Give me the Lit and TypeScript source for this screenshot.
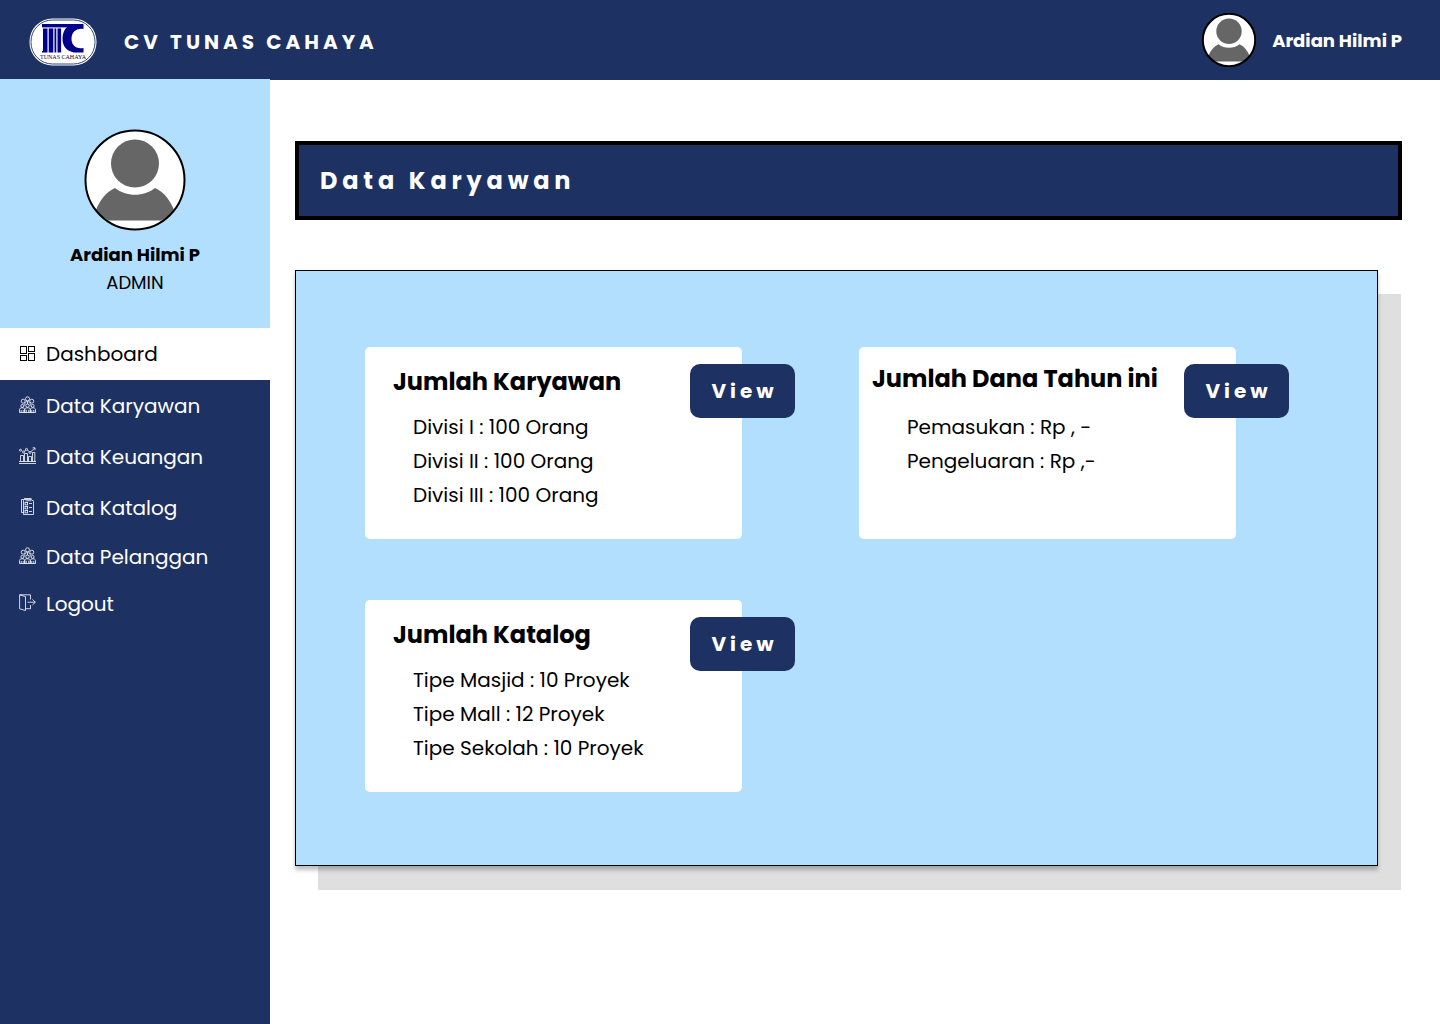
import { LitElement, html, css, svg, nothing, type TemplateResult } from "lit";
import { customElement, property } from "lit/decorators.js";

type IconName = "grid" | "people" | "chart" | "catalog" | "logout";

interface NavItem {
  label: string;
  icon: IconName;
  active?: boolean;
  compact?: boolean;
}

interface SummaryCard {
  title: string;
  wide?: boolean;
  lines: string[];
}

const NAV_ITEMS: NavItem[] = [
  { label: "Dashboard", icon: "grid", active: true },
  { label: "Data Karyawan", icon: "people" },
  { label: "Data Keuangan", icon: "chart" },
  { label: "Data Katalog", icon: "catalog" },
  { label: "Data Pelanggan", icon: "people", compact: true },
  { label: "Logout", icon: "logout", compact: true },
];

const CARDS: SummaryCard[] = [
  {
    title: "Jumlah Karyawan",
    lines: ["Divisi I : 100 Orang", "Divisi II : 100 Orang", "Divisi III : 100 Orang"],
  },
  {
    title: "Jumlah Dana Tahun ini",
    wide: true,
    lines: ["Pemasukan : Rp , -", "Pengeluaran : Rp ,-"],
  },
  {
    title: "Jumlah Katalog",
    lines: ["Tipe Masjid : 10 Proyek", "Tipe Mall : 12 Proyek", "Tipe Sekolah : 10 Proyek"],
  },
];

const ICONS: Record<IconName, TemplateResult> = {
  grid: svg`
    <rect x="1.5" y="1.5" width="6" height="7"/>
    <rect x="9.5" y="1.5" width="6" height="5"/>
    <rect x="1.5" y="10.5" width="6" height="5"/>
    <rect x="9.5" y="8.5" width="6" height="7"/>`,
  people: svg`
    <circle cx="8.5" cy="2.8" r="2"/>
    <circle cx="4.2" cy="5.2" r="2"/>
    <circle cx="12.8" cy="5.2" r="2"/>
    <path d="M5.8 9.5V7.6C5.8 6.2 7 5.6 8.5 5.6S11.2 6.2 11.2 7.6V9.5M8.5 5.6V8"/>
    <circle cx="3.4" cy="9.9" r="1.5"/>
    <circle cx="8.5" cy="9.7" r="1.7"/>
    <circle cx="13.6" cy="9.9" r="1.5"/>
    <path d="M.5 16.5V13.6C.5 12.4 1.6 11.8 3.2 11.8S5.7 12.4 5.7 13.6V16.5M5.7 16.5V13.6C5.7 12.4 7 11.8 8.5 11.8S11.3 12.4 11.3 13.6V16.5M11.3 16.5V13.6C11.3 12.4 12.4 11.8 13.8 11.8S16.5 12.4 16.5 13.6V16.5M.5 16.5H16.5M2.2 14V16.5M4.2 14V16.5M7.3 13.8V16.5M9.7 13.8V16.5M12.8 14V16.5M14.8 14V16.5"/>`,
  chart: svg`
    <path d="M0 14.5H17M0 16.5H17"/>
    <path d="M1.5 14.5V8.5H4.5V14.5M5.5 14.5V6.5H8.5V14.5M9.5 14.5V9.5H12.5V14.5M13.5 14.5V5.5H15.8V14.5"/>
    <circle cx="1.5" cy="3.2" r="1"/>
    <circle cx="4.5" cy="5" r="1"/>
    <circle cx="7.5" cy="2.4" r="1"/>
    <circle cx="11" cy="5.4" r="1"/>
    <path d="M5.2 4.4L6.9 3M8.4 3L10.2 4.8M11.8 4.8L15.8 1M13.6 .8H16V3.2"/>`,
  catalog: svg`
    <path d="M4.500 1.500H2.500V14.500H4.500M4.500 2.500V16.500H14.500V3.500L12.500 1.500H4.500ZM5 .500H12.500M12.500 2.500H14.500"/>
    <rect x="6" y="4.5" width="2.6" height="2.4"/>
    <rect x="6" y="8.5" width="2.6" height="2.4"/>
    <rect x="6" y="12.5" width="2.6" height="2.4"/>
    <path d="M10 5.5H13M10 9.5H13M10 13.5H13M6.5 2.8H12"/>`,
  logout: svg`
    <path d="M.6 .8L6.5 2.6V16.5L.6 14.8ZM.6 .8H11.5V5.5M11.5 11V14.7H6.5M8.5 8.2H16.3M13.4 5.4L16.3 8.2L13.4 11"/>`,
};

/** Thin-line icon used by the sidebar links. */
@customElement("nav-icon")
export class NavIcon extends LitElement {
  @property() name: IconName = "grid";

  static styles = css`
    :host {
      display: block;
      flex: none;
      width: 17px;
      height: 17px;
    }
    .icon {
      display: block;
      width: 100%;
      height: 100%;
      fill: none;
      stroke: currentColor;
      stroke-width: 0.8;
    }
    .strong {
      stroke-width: 1;
    }
  `;

  render() {
    return html`<svg class="icon ${this.name === "grid" ? "strong" : ""}" viewBox="0 0 17 17" aria-hidden="true">
      ${ICONS[this.name]}
    </svg>`;
  }
}

/** Round placeholder portrait; its size comes from the host. */
@customElement("user-avatar")
export class UserAvatar extends LitElement {
  static styles = css`
    :host {
      display: block;
      flex: none;
    }
    .portrait {
      display: block;
      width: 100%;
      height: 100%;
    }
    .disc {
      fill: #fff;
    }
    .ring {
      fill: none;
      stroke: #000;
      stroke-width: 2;
      vector-effect: non-scaling-stroke;
    }
    .figure {
      fill: #666;
    }
  `;

  render() {
    return html`<svg class="portrait" viewBox="0 0 102 102" aria-hidden="true">
      <circle class="disc" cx="51" cy="51" r="49.5" />
      <circle class="figure" cx="51" cy="34.5" r="24" />
      <path class="figure" d="M12 81C16 71 22 63 31 59C42 68 60 68 71 59C80 63 86 71 90 81C87 86 82 89 77 91.5H25C20 89 15 86 12 81Z" />
      <circle class="ring" cx="51" cy="51" r="49.5" />
    </svg>`;
  }
}

/** Company badge: pill with a column mark and the company name. */
@customElement("brand-logo")
export class BrandLogo extends LitElement {
  static styles = css`
    :host {
      display: block;
      flex: none;
      width: 68px;
      height: 48px;
    }
    .badge {
      display: block;
      width: 100%;
      height: 100%;
    }
    .plate {
      fill: #fff;
    }
    .line {
      fill: none;
      stroke: #1e3163;
      stroke-width: 0.9;
    }
    .mark {
      fill: #00008b;
    }
    .name {
      fill: #00003c;
      font: 6px "Liberation Serif", "Times New Roman", serif;
    }
  `;

  render() {
    return html`<svg class="badge" viewBox="0 0 68 48" role="img" aria-label="Tunas Cahaya">
      <rect class="plate" x="0.5" y="0.5" width="67" height="47" rx="23" />
      <rect class="line" x="2" y="2" width="64" height="44" rx="21.5" />
      <rect class="mark" x="13" y="6" width="30" height="3.4" />
      <path class="mark" d="M14 10.400H18.500V34.500H13V33H14Z" />
      <rect class="mark" x="19.700" y="10.400" width="4.600" height="24.100" />
      <rect class="mark" x="25.500" y="10.400" width="1.800" height="24.100" />
      <rect class="mark" x="28.500" y="10.400" width="3.600" height="24.100" />
      <path class="mark" d="M42 6H54.500V11C47 10 42.500 14.500 42.500 21C42.500 27 47 31.500 54.500 30V34.500H45C37.500 33 33.500 28 33.500 21C33.500 14 36.500 9 42 6Z" />
      <text class="name" x="34" y="41" text-anchor="middle">TUNAS CAHAYA</text>
    </svg>`;
  }
}

/** White summary box with a button hanging over its right edge. */
@customElement("summary-card")
export class SummaryCardElement extends LitElement {
  @property({ attribute: false }) card!: SummaryCard;

  static styles = css`
    :host {
      display: block;
    }
    .card {
      position: relative;
      box-sizing: border-box;
      height: 100%;
      min-height: 192px;
      padding: 17px 28px 24px;
      border-radius: 5px;
      background: #fff;
    }
    .wide {
      padding: 14px 13px 24px;
    }
    .title {
      margin: 0;
      font-size: 24px;
      font-weight: 700;
      line-height: 36px;
      white-space: nowrap;
    }
    .lines {
      margin: 10px 0 0;
      padding: 0 0 0 20px;
      list-style: none;
      font-size: 20px;
      line-height: 34px;
    }
    .wide .lines {
      margin-top: 13px;
      padding-left: 35px;
    }
    .view {
      position: absolute;
      top: 17px;
      right: -53px;
      width: 105px;
      height: 54px;
      padding: 0 0 0 4px;
      border: 0;
      border-radius: 10px;
      background: #1e3163;
      color: #fff;
      font: inherit;
      font-size: 20px;
      font-weight: 700;
      letter-spacing: 0.2em;
      cursor: pointer;
    }
  `;

  render() {
    const { title, lines, wide } = this.card;
    return html`<article class="card ${wide ? "wide" : ""}">
      <h2 class="title">${title}</h2>
      <ul class="lines">
        ${lines.map((line) => html`<li>${line}</li>`)}
      </ul>
      <button class="view" type="button">View</button>
    </article>`;
  }
}

@customElement("app-root")
export class AppRoot extends LitElement {
  static styles = css`
    :host {
      display: block;
      color: #000;
      background: #fff;
      font-family: Poppins, Inter, "Open Sans", sans-serif;
    }
    .page {
      display: grid;
      grid-template: auto 1fr / 270px 1fr;
      min-height: 100vh;
    }
    .topbar {
      grid-column: 1 / -1;
      display: flex;
      align-items: center;
      height: 80px;
      box-sizing: border-box;
      padding: 4px 38px 0 29px;
      background: #1e3163;
      color: #fff;
    }
    .company {
      margin-left: 27px;
      font-size: 20px;
      font-weight: 700;
      letter-spacing: 0.2em;
    }
    .account {
      display: flex;
      align-items: center;
      gap: 16px;
      margin: 0 0 4px auto;
      font-size: 18px;
      font-weight: 700;
    }
    .account-avatar {
      width: 54px;
      height: 54px;
    }
    .sidebar {
      margin-top: -1px;
      background: #1e3163;
      color: #fff;
    }
    .profile {
      display: flex;
      flex-direction: column;
      align-items: center;
      padding: 50px 0 31px;
      background: #b2dffe;
      color: #000;
      font-size: 18px;
      line-height: 28px;
    }
    .profile-avatar {
      width: 102px;
      height: 102px;
      margin-bottom: 10px;
    }
    .profile-name {
      font-weight: 700;
    }
    .links {
      display: flex;
      flex-direction: column;
    }
    .link {
      display: flex;
      align-items: center;
      gap: 10px;
      height: 51px;
      padding-left: 19px;
      color: inherit;
      font-size: 20px;
      text-decoration: none;
    }
    .link-icon {
      margin-bottom: 2px;
    }
    .active {
      height: 52px;
      background: #fff;
      color: #000;
    }
    .compact {
      height: 47px;
    }
    .content {
      min-width: 0;
      padding: 61px 38px 61px 25px;
    }
    .heading {
      margin: 0 0 50px;
      padding: 0 21px;
      border: 4px solid #000;
      background: #1e3163;
      color: #fff;
      font-size: 24px;
      font-weight: 700;
      line-height: 71px;
      letter-spacing: 0.2em;
    }
    .panel {
      display: grid;
      grid-template-columns: 1fr 1fr;
      gap: 61px 117px;
      margin-right: 24px;
      padding: 76px 141px 73px 69px;
      border: 1px solid #000;
      background: #b2dffe;
      box-shadow: 0 4px 4px rgba(0, 0, 0, 0.25), 23px 24px 0 #dfdfdf;
    }
  `;

  render() {
    return html`<div class="page">
      <header class="topbar">
        <brand-logo></brand-logo>
        <span class="company">CV TUNAS CAHAYA</span>
        <div class="account">
          <user-avatar class="account-avatar"></user-avatar>
          <span>Ardian Hilmi P</span>
        </div>
      </header>
      <aside class="sidebar">
        <div class="profile">
          <user-avatar class="profile-avatar"></user-avatar>
          <span class="profile-name">Ardian Hilmi P</span>
          <span>ADMIN</span>
        </div>
        <nav class="links">
          ${NAV_ITEMS.map(
            (item) => html`<a
              class="link ${item.active ? "active" : ""} ${item.compact ? "compact" : ""}"
              href="#"
              aria-current=${item.active ? "page" : nothing}
            >
              <nav-icon class="link-icon" .name=${item.icon}></nav-icon>
              <span>${item.label}</span>
            </a>`
          )}
        </nav>
      </aside>
      <main class="content">
        <h1 class="heading">Data Karyawan</h1>
        <section class="panel">
          ${CARDS.map((card) => html`<summary-card .card=${card}></summary-card>`)}
        </section>
      </main>
    </div>`;
  }
}
